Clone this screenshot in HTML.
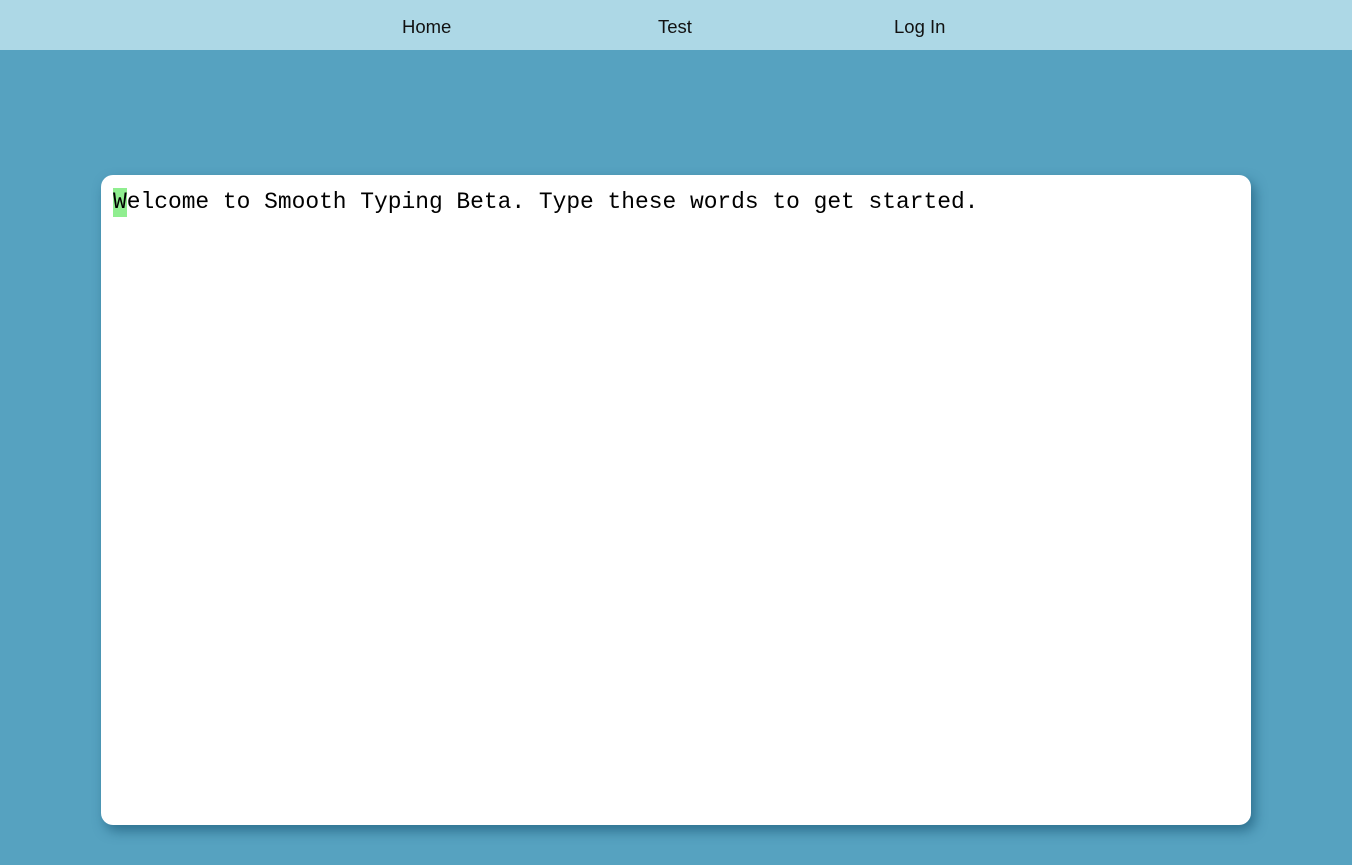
<!DOCTYPE html>
<html><head><style>
html,body{margin:0;padding:0;}
body{width:1352px;height:865px;background:#56a2c0;overflow:hidden;position:relative;font-family:"Liberation Sans",sans-serif;}
.nav{position:absolute;left:0;top:0;width:1352px;height:50px;background:#add8e6;}
.nav span{position:absolute;top:17px;font-size:18.5px;line-height:20px;color:#111;}
.card{position:absolute;left:101px;top:175px;width:1150px;height:650px;background:#fff;border-radius:12px;box-shadow:4px 6px 12px rgba(20,80,110,0.6);}
.txt{position:absolute;left:12px;top:13px;font-family:"Liberation Mono",monospace;font-size:22.9px;line-height:29px;color:#000;white-space:pre;}
.hl{background:#90ee90;display:inline-block;height:29px;vertical-align:top;}
</style></head><body>
<div class="nav"><span style="left:402px">Home</span><span style="left:658px">Test</span><span style="left:894px">Log In</span></div>
<div class="card"><div class="txt"><span class="hl">W</span>elcome to Smooth Typing Beta. Type these words to get started.</div></div>
</body></html>
